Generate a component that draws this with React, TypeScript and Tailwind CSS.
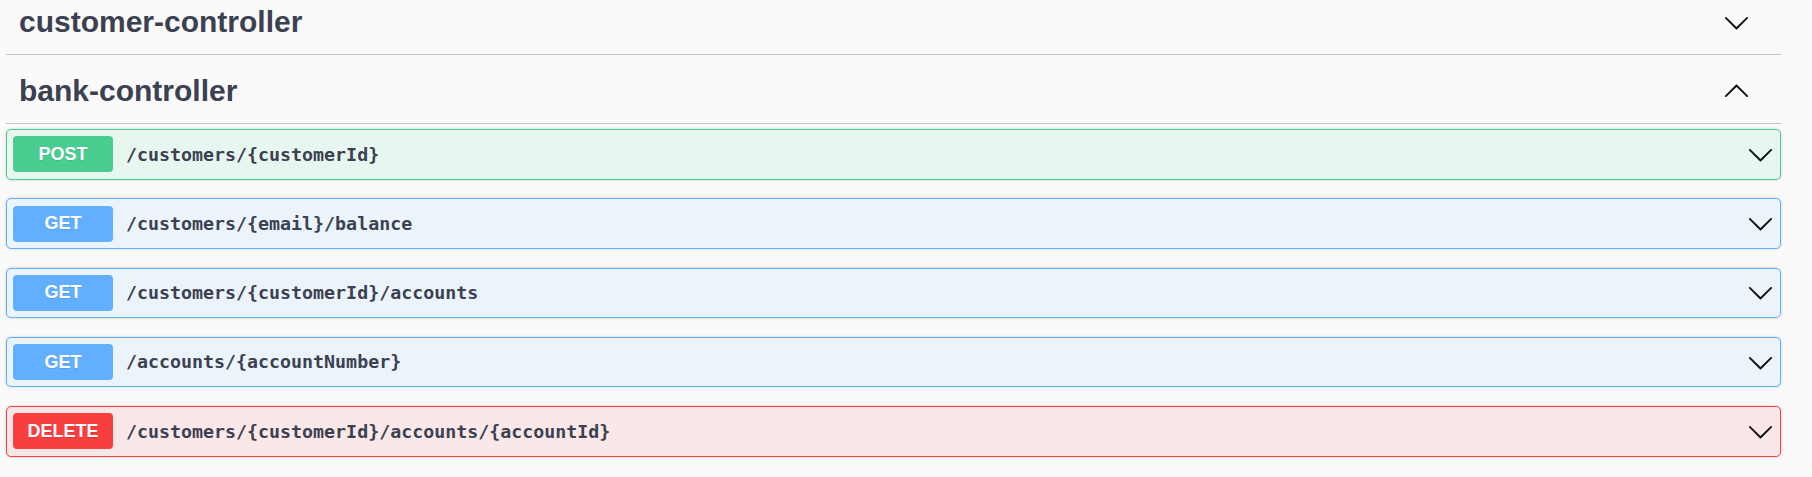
const ops = [
  { method: "POST", path: "/customers/{customerId}", badge: "bg-[#49cc90]", box: "bg-[#e8f6f0] border-[#49cc90]" },
  { method: "GET", path: "/customers/{email}/balance", badge: "bg-[#61affe]", box: "bg-[#ebf3fb] border-[#61affe]" },
  { method: "GET", path: "/customers/{customerId}/accounts", badge: "bg-[#61affe]", box: "bg-[#ebf3fb] border-[#61affe]" },
  { method: "GET", path: "/accounts/{accountNumber}", badge: "bg-[#61affe]", box: "bg-[#ebf3fb] border-[#61affe]" },
  { method: "DELETE", path: "/customers/{customerId}/accounts/{accountId}", badge: "bg-[#f93e3e]", box: "bg-[#fae7e7] border-[#f93e3e]" },
]

const Arrow = ({ up = false }: { up?: boolean }) => (
  <svg width="27" height="27" viewBox="0 0 20 20" className={up ? "rotate-180" : ""}>
    <path
      fill="#111"
      d="M17.418 6.109c.272-.268.709-.268.979 0s.271.701 0 .969l-7.908 7.83c-.27.268-.707.268-.979 0l-7.908-7.83c-.27-.268-.27-.701 0-.969.271-.268.709-.268.979 0L10 13.25l7.418-7.141z"
    />
  </svg>
)

const TagHeader = ({ name, open }: { name: string; open?: boolean }) => (
  <div className="flex items-center justify-between h-[64px] mb-[5px] border-b border-[#c4c5ca] pl-[13px] pr-[31px]">
    <h3 className="text-[30px] leading-[34.5px] font-bold text-[#3b4151] font-['Liberation_Sans',Arial,sans-serif]">
      {name}
    </h3>
    <Arrow up={open} />
  </div>
)

export default function App() {
  return (
    <div className="min-h-[477px] w-full bg-[#fafafa] overflow-hidden">
      <div className="ml-[6px] w-[1775px] -mt-[9px]">
        <TagHeader name="customer-controller" />
        <TagHeader name="bank-controller" open />
        <div className="flex flex-col gap-[18.75px] mt-[1px]">
          {ops.map((op, i) => (
            <div
              key={i}
              className={`flex items-center h-[50.5px] border rounded-[5px] px-[6px] shadow-[0_0_3px_rgba(0,0,0,0.19)] ${op.box}`}
            >
              <span
                className={`w-[100px] h-[36px] rounded-[4px] flex items-center justify-center text-white font-bold text-[18px] font-['Liberation_Sans',Arial,sans-serif] [text-shadow:0_1px_0_rgba(0,0,0,0.1)] ${op.badge}`}
              >
                {op.method}
              </span>
              <span className="ml-[13px] flex-1 text-[18.3px] font-bold text-[#3b4151] font-['DejaVu_Sans_Mono',monospace]">
                {op.path}
              </span>
              <Arrow />
            </div>
          ))}
        </div>
      </div>
    </div>
  )
}
